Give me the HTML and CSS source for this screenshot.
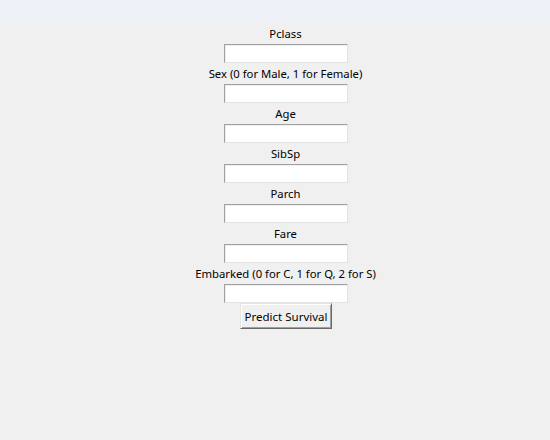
FILE: index.html
```html
<!DOCTYPE html>
<html>
<head>
<meta charset="utf-8">
<link rel="stylesheet" href="styles.css">
</head>
<body>
<div class="topbar"></div>
<main class="form">
  <label class="lbl">Pclass</label>
  <input class="entry" type="text">
  <label class="lbl">Sex (0 for Male, 1 for Female)</label>
  <input class="entry" type="text">
  <label class="lbl">Age</label>
  <input class="entry" type="text">
  <label class="lbl">SibSp</label>
  <input class="entry" type="text">
  <label class="lbl">Parch</label>
  <input class="entry" type="text">
  <label class="lbl">Fare</label>
  <input class="entry" type="text">
  <label class="lbl">Embarked (0 for C, 1 for Q, 2 for S)</label>
  <input class="entry" type="text">
  <button class="btn" type="button">Predict Survival</button>
</main>
</body>
</html>
```
FILE: styles.css
```css
html, body {
  margin: 0;
  padding: 0;
  background: #f0f0f0;
  height: 100%;
}
body {
  font-family: "Noto Sans", "DejaVu Sans", sans-serif;
  font-size: 11.3px;
  color: #000;
}
.topbar {
  height: 22px;
  background: #eef2f8;
}
.form {
  display: flex;
  flex-direction: column;
  align-items: center;
  padding-top: 1px;
  padding-left: 21px;
}
.lbl {
  display: block;
  height: 21px;
  line-height: 21px;
  white-space: nowrap;
}
.entry {
  box-sizing: border-box;
  width: 124px;
  height: 19px;
  margin: 0;
  padding: 0 2px;
  background: #fff;
  border-style: solid;
  border-width: 1px;
  border-color: #a0a0a0 #e3e3e3 #e3e3e3 #a0a0a0;
  box-shadow: inset 1px 1px 0 #f0f0f0;
  outline: none;
  font: inherit;
}
.btn {
  box-sizing: border-box;
  width: 92px;
  height: 26px;
  margin: 0 0 0 1px;
  padding: 0;
  background: #f0f0f0;
  border-style: solid;
  border-width: 1px;
  border-color: #e3e3e3 #696969 #696969 #e3e3e3;
  box-shadow: inset 1px 1px 0 #fff, inset -1px -1px 0 #a0a0a0;
  font-family: "Noto Sans", "DejaVu Sans", sans-serif;
  font-size: 11.5px;
  color: #000;
}
```
